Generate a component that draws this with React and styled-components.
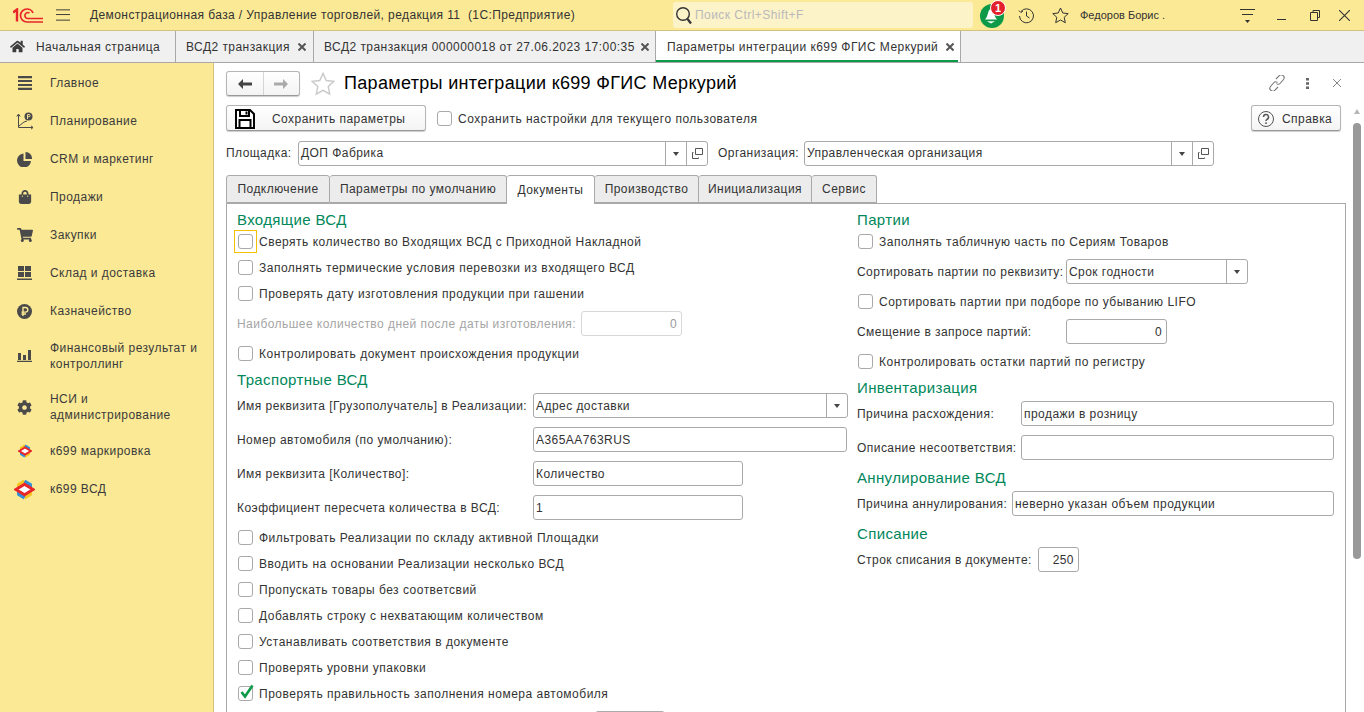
import React from 'react';
import styled, { createGlobalStyle } from 'styled-components';
import { FaHome, FaShoppingBag, FaShoppingCart, FaCog } from 'react-icons/fa';

const GlobalStyle = createGlobalStyle`
  html, body {
    margin: 0;
    height: 100%;
    overflow: hidden;
    background: #fff;
  }
  * {
    box-sizing: border-box;
  }
  body {
    font-family: "Liberation Sans", Arial, sans-serif;
    font-size: 12px;
    letter-spacing: 0.45px;
    color: #333;
  }
`;

const yellow = '#fbe995';

const Page = styled.div`
  width: 1364px;
  height: 712px;
  overflow: hidden;
  display: flex;
  flex-direction: column;
`;

const TopBar = styled.div`
  height: 31px;
  flex: none;
  display: flex;
  align-items: center;
  background: ${yellow};
  border-bottom: 1px solid #d2c27e;
`;
const Logo = styled.div`
  width: 56px;
  padding-left: 13px;
  display: flex;
`;
const IconSlot = styled.div`
  width: ${(p) => p.$w}px;
  flex: none;
  display: flex;
  align-items: center;
  justify-content: center;
  color: #3c3c3c;
`;
const AppTitle = styled.div`
  width: 583px;
  margin-left: 20px;
  letter-spacing: 0.41px;
  white-space: nowrap;
`;
const Search = styled.div`
  width: 300px;
  height: 26px;
  flex: none;
  background: #fdf3c9;
  border-radius: 3px;
  display: flex;
  align-items: center;
  gap: 2px;
  padding-left: 2px;
  color: #b9b9b9;
`;
const Bell = styled.div`
  position: relative;
  width: 24px;
  height: 24px;
  margin: 1px 0 0 7px;
  flex: none;
  border-radius: 50%;
  background: #0d9a48;
  display: flex;
  align-items: center;
  justify-content: center;
  padding: 2px 3px 0 0;
`;
const Badge = styled.span`
  position: absolute;
  top: -4px;
  right: -2px;
  width: 16px;
  height: 16px;
  border-radius: 50%;
  background: #e3202b;
  border: 1px solid #fff;
  color: #fff;
  font-size: 11px;
  font-weight: bold;
  letter-spacing: 0;
  line-height: 14px;
  text-align: center;
`;
const UserName = styled.div`
  width: 152px;
  font-size: 11px;
  letter-spacing: 0;
  white-space: nowrap;
`;

const TabBar = styled.div`
  height: 32px;
  flex: none;
  display: flex;
  background: #f0f0f0;
  border-bottom: 1px solid #a8a8a8;
`;
const OpenTab = styled.div`
  position: relative;
  height: 31px;
  display: flex;
  align-items: center;
  width: ${(p) => p.$w}px;
  padding-left: ${(p) => p.$pad}px;
  padding-right: ${(p) => p.$pr || 7}px;
  flex: none;
  justify-content: space-between;
  white-space: nowrap;
  border-right: 1px solid #a8a8a8;
  background: ${(p) => (p.$active ? '#fff' : 'transparent')};

  ${(p) =>
    p.$active &&
    `&::after {
      content: '';
      position: absolute;
      left: 0;
      right: 2px;
      bottom: 0;
      height: 2px;
      background: #0d9a48;
    }`}
`;
const HomeLabel = styled.span`
  display: flex;
  align-items: center;
  gap: 11px;
`;
const TabClose = styled.svg`
  flex: none;
  width: 8px;
  height: 8px;
  stroke: #555;
  stroke-width: 2;
`;

const Body = styled.div`
  flex: 1;
  min-height: 0;
  display: flex;
`;
const Sidebar = styled.nav`
  width: 214px;
  flex: none;
  background: ${yellow};
  border-right: 1px solid #d2c27e;
  padding-top: 1px;
`;
const NavItem = styled.div`
  height: ${(p) => p.$h || 38}px;
  display: flex;
  align-items: center;
  color: #3b3b3b;
  line-height: 16px;
`;
const NavIcon = styled.div`
  width: 50px;
  flex: none;
  display: flex;
  justify-content: center;
  padding-right: 1px;
  color: #4a4a4a;
`;

const Main = styled.main`
  flex: 1;
  min-width: 0;
  display: flex;
`;
const Content = styled.div`
  flex: 1;
  min-width: 0;
  padding: 8px 0 0 12px;
`;
const HeadRow = styled.div`
  height: 26px;
  margin-bottom: 8px;
  display: flex;
  align-items: flex-start;
`;
const NavGroup = styled.div`
  width: 74px;
  height: 25px;
  display: flex;
  border: 1px solid #b5b5b5;
  border-bottom-color: #999;
  border-radius: 3px;
  box-shadow: 0 1px 1px #ccc;
  background: linear-gradient(#fff, #f3f3f3);
`;
const NavBtn = styled.div`
  flex: 1;
  display: flex;
  align-items: center;
  justify-content: center;
  & + & {
    border-left: 1px solid #d5d5d5;
  }
`;
const FavSlot = styled.div`
  width: 24px;
  height: 25px;
  margin-left: 11px;
  flex: none;
  display: flex;
  align-items: center;
`;
const Title = styled.h1`
  margin: 1px 0 0 9px;
  font-size: 18px;
  line-height: 22px;
  font-weight: normal;
  color: #000;
  letter-spacing: 0.32px;
  white-space: nowrap;
`;
const HeadTools = styled.div`
  margin: 0 -7px 0 auto;
  height: 24px;
  display: flex;
  color: #777;
`;
const ActionRow = styled.div`
  height: 28px;
  margin-bottom: 8px;
  display: flex;
  align-items: flex-start;
`;
const Button = styled.div`
  width: ${(p) => p.$w}px;
  height: 26px;
  margin-right: ${(p) => p.$mr || 0}px;
  padding-top: 1px;
  flex: none;
  display: flex;
  align-items: center;
  border: 1px solid #b5b5b5;
  border-bottom-color: #999;
  border-radius: 3px;
  box-shadow: 0 1px 1px #ccc;
  background: linear-gradient(#fff, #f4f4f4);
`;
const SaveLabel = styled.span`
  margin-left: 9px;
`;
const HelpLabel = styled.span`
  margin-left: 2px;
`;
const Spacer = styled.div`
  flex: 1;
`;
const TopFields = styled.div`
  height: 26px;
  display: flex;
  align-items: flex-start;
  line-height: 25px;
`;
const TopLabel = styled.div`
  width: ${(p) => p.$w}px;
  flex: none;
  white-space: nowrap;
`;

const Input = styled.div`
  width: ${(p) => p.$w}px;
  height: 25px;
  flex: none;
  display: flex;
  align-items: center;
  border: 1px solid ${(p) => (p.$disabled ? '#d8d8d8' : '#a9a9a9')};
  border-radius: 3px;
  background: #fff;
  padding-left: ${(p) => (p.$right ? 0 : 2)}px;
  margin-right: ${(p) => p.$mr || 0}px;
  color: ${(p) => (p.$disabled ? '#999' : '#333')};
`;
const InputText = styled.span`
  flex: 1;
  white-space: nowrap;
  text-align: ${(p) => (p.$right ? 'right' : 'left')};
  padding-right: ${(p) => (p.$right ? 4 : 0)}px;
`;
const InputBtn = styled.span`
  width: ${(p) => p.$w || 21}px;
  height: 100%;
  flex: none;
  display: flex;
  align-items: center;
  justify-content: center;
  border-left: 1px solid #a9a9a9;
`;

const TabStrip = styled.div`
  display: flex;
  height: 29px;
  margin-top: 8px;
  position: relative;
  z-index: 1;
`;
const FormTab = styled.div`
  height: ${(p) => (p.$active ? 29 : 28)}px;
  width: ${(p) => p.$w}px;
  flex: none;
  display: flex;
  align-items: center;
  justify-content: center;
  white-space: nowrap;
  border: 1px solid #a9a9a9;
  border-left-width: ${(p) => (p.$first ? 1 : 0)}px;
  border-bottom: ${(p) => (p.$active ? 'none' : '1px solid #a9a9a9')};
  border-radius: 3px 3px 0 0;
  background: ${(p) => (p.$active ? '#fff' : '#ececec')};
`;
const TabPanel = styled.div`
  width: 1120px;
  height: 600px;
  margin-top: -1px;
  border: 1px solid #a9a9a9;
  display: grid;
  grid-template-columns: 620px 1fr;
  padding: 6px 0 0 10px;
`;
const Column = styled.div`
  display: flex;
  flex-direction: column;
`;
const Heading = styled.h2`
  height: ${(p) => p.$h || 22}px;
  margin: 0;
  display: flex;
  align-items: flex-end;
  font-size: 15px;
  font-weight: normal;
  letter-spacing: 0.35px;
  line-height: 16px;
  color: #00875a;
`;
const CheckRow = styled.label`
  height: 26px;
  flex: none;
  display: flex;
  align-items: center;
  gap: 6px;
  padding: 1px 0 0 1px;
  margin-left: ${(p) => p.$ml || 0}px;
  letter-spacing: 0.5px;
  white-space: nowrap;
`;
const Box = styled.span`
  position: relative;
  width: 15px;
  height: 15px;
  margin-top: -1px;
  flex: none;
  border: 1px solid #a9a9a9;
  border-radius: 3px;
  background: #fff;

  ${(p) =>
    p.$focus &&
    `&::after {
      content: '';
      position: absolute;
      inset: -5px -5px -5px -5px;
      border: 1px solid #f2c100;
    }`}
`;
const Tick = styled.svg`
  position: absolute;
  left: 1px;
  top: -3px;
`;
const FieldRow = styled.div`
  height: 34px;
  flex: none;
  display: flex;
  align-items: flex-start;
  padding-top: 5px;
  line-height: 26px;
`;
const FieldLabel = styled.div`
  width: ${(p) => p.$w}px;
  flex: none;
  white-space: nowrap;
  color: ${(p) => (p.$disabled ? '#a5a5a5' : 'inherit')};
`;

const ScrollColumn = styled.div`
  width: 19px;
  flex: none;
  padding: 46px 3px 0 8px;
  display: flex;
  flex-direction: column;
  align-items: center;
`;
const ScrollUp = styled.div`
  width: 0;
  height: 0;
  margin-bottom: 9px;
  border-left: 3px solid transparent;
  border-right: 3px solid transparent;
  border-bottom: 5px solid #b5b5b5;
`;
const ScrollThumb = styled.div`
  width: 8px;
  height: 436px;
  border-radius: 4px;
  background: #999;
`;

const ArrowDown = () => (
  <svg width="6" height="4" viewBox="0 0 6 4">
    <path d="M0 0h6L3 4z" fill="#444" />
  </svg>
);

const OpenIcon = () => (
  <svg width="11" height="11" viewBox="0 0 11 11" fill="none" stroke="#555">
    <path d="M3.500.5h7v6h-7z" />
    <path d="M1.500 4.500h-1v6h6v-1" />
  </svg>
);

const Logo1C = () => (
  <svg width="30" height="15" viewBox="0 0 30 15" fill="none" stroke="#e8262a" strokeWidth="1.700">
    <path d="M0 4.500L4 1.500V13.500" strokeWidth="2.400" />
    <path d="M30 14H14A6.500 6.500 0 1 1 14 1C17 1 19 2.500 20 5" />
    <path d="M30 10.500H14.500A3 3 0 1 1 16.500 5" />
  </svg>
);

const Burger = () => (
  <svg width="15" height="12" viewBox="0 0 15 12" stroke="#333">
    <path d="M0 .5h15M0 5.500h15M0 11.500h15" />
  </svg>
);

const BellGlyph = () => (
  <svg width="14" height="15" viewBox="0 0 14 15" fill="#fff">
    <path d="M7 0c1 0 2 1 2.500 2.500C10.500 5 10.500 8 13 10.500H1C3.500 8 3.500 5 4.500 2.500 5 1 6 0 7 0z" />
    <path d="M3 12.200h8L7 14.500z" />
  </svg>
);

const HistoryIcon = () => (
  <svg width="17" height="17" viewBox="0 0 17 17" fill="none" stroke="#333">
    <path d="M3 4.500A7 7 0 1 1 1.500 9" />
    <path d="M1 3.500L2.800 5.500 5 4" />
    <path d="M8.500 4.500v4.500l3 2" />
  </svg>
);

const StarIcon = ({ size = 17, color = '#333' }) => (
  <svg width={size} height={size} viewBox="0 0 17 17" fill="none" stroke={color}>
    <path d="M8.500 1l2.300 5 5.400.6-4 3.700 1.100 5.400-4.800-2.700-4.800 2.700 1.100-5.400-4-3.700 5.400-.6z" />
  </svg>
);

const PlanIcon = () => (
  <svg width="18" height="18" viewBox="0 0 18 18" fill="none" stroke="#4a4a4a">
    <path d="M2.500 3v12.500H17" />
    <path d="M.8 4.500L2.500 2l1.700 2.500M15 13.800l2 1.700-2 1.700" />
    <path d="M3 14l5-4 3-1" />
    <circle cx="12.500" cy="4.500" r="4" fill="#4a4a4a" stroke="none" />
    <path d="M11.500 7V2.500h1.500a1 1 0 0 1 0 2.200h-2" stroke="#fbe995" strokeWidth="0.9" />
  </svg>
);

const MenuIcon = () => (
  <svg width="14" height="14" viewBox="0 0 14 14" fill="#4a4a4a">
    <path d="M0 0h14v2.200H0zM0 3.900h14v2.200H0zM0 7.900h14v2.200H0zM0 11.800h14V14H0z" />
  </svg>
);

const PieIcon = () => (
  <svg width="15" height="15" viewBox="0 0 15 15" fill="#4a4a4a">
    <path d="M6.500 1.500v7.500H14A7 7 0 1 1 6.500 1.500z" />
    <path d="M8.500 0A6.500 6.500 0 0 1 15 7H8.500z" />
  </svg>
);

const WarehouseIcon = () => (
  <svg width="15" height="14" viewBox="0 0 15 14" fill="#4a4a4a">
    <path d="M1 0h6v5H1zM8 0h6v5H8zM1 6h6v5H1zM8 6h6v5H8zM0 12.500h15V14H0z" />
  </svg>
);

const RubleIcon = () => (
  <svg width="15" height="15" viewBox="0 0 15 15">
    <circle cx="7.500" cy="7.500" r="7.500" fill="#4a4a4a" />
    <path d="M6 12V3.500h2.500a2.300 2.300 0 0 1 0 4.600H4.500M4.500 10h4.500" fill="none" stroke="#fbe995" strokeWidth="1.400" />
  </svg>
);

const BarsIcon = () => (
  <svg width="15" height="12" viewBox="0 0 15 12" fill="#4a4a4a">
    <path d="M1 3h3v7H1zM6 5h3v5H6zM11 0h3v10h-3zM0 10.800h15V12H0z" />
  </svg>
);

const K699Icon = ({ size }) => (
  <svg width={size} height={size} viewBox="0 0 20 20" fill="none" strokeWidth="3.200">
    <path d="M4.500 9V5.500L10 2" stroke="#f7c520" />
    <path d="M10 2L15.500 5.500V10" stroke="#2f8fd8" />
    <path d="M15.500 11V14.500L10 18" stroke="#f7c520" />
    <path d="M10 18L4.500 14.500V10" stroke="#2f8fd8" />
    <path d="M1.800 10L10 5 18.200 10 10 15Z" stroke="#e8262a" strokeWidth="2.800" fill="#fff" />
  </svg>
);

const SaveIcon = () => (
  <svg width="20" height="20" viewBox="0 0 20 20" fill="none" stroke="#000" strokeWidth="2">
    <path d="M1 1h14l4 4v14H1z" fill="#fff" />
    <path d="M5 1v6h9V1" />
    <path d="M11.500 2.500v3" />
    <path d="M4.500 19v-8h11v8" />
  </svg>
);

const BackArrow = ({ color, flip }) => (
  <svg width="14" height="10" viewBox="0 0 14 10" fill={color} style={flip ? { transform: 'scaleX(-1)' } : undefined}>
    <path d="M0 5l5-5v3.500h9v3H5V10z" />
  </svg>
);

const HelpIcon = () => (
  <svg width="18" height="18" viewBox="0 0 18 18" fill="none" stroke="#555">
    <circle cx="9" cy="9" r="7.500" />
    <path d="M6.500 7a2.500 2.500 0 1 1 3.500 2.300c-.7.4-1 .8-1 1.700" strokeWidth="1.500" />
    <path d="M9 12.300v1.700" strokeWidth="1.500" />
  </svg>
);

const LinkIcon = () => (
  <svg width="16" height="16" viewBox="0 0 16 16" fill="none" stroke="#777" strokeWidth="1.100">
    <path d="M7 4l3-3a2.500 2.500 0 0 1 4.500 3.500L11 8.500a2.300 2.300 0 0 1-3.500 0" />
    <path d="M9 12l-3 3a2.500 2.500 0 0 1-4.500-3.500L5 7.500a2.300 2.300 0 0 1 3.500 0" />
  </svg>
);

const DotsIcon = () => (
  <svg width="3" height="11" viewBox="0 0 3 11" fill="#666">
    <path d="M0 0h3v2.500H0zM0 4.200h3v2.500H0zM0 8.500h3V11H0z" />
  </svg>
);

const CrossIcon = ({ size = 8, color = '#666' }) => (
  <svg width={size} height={size} viewBox="0 0 8 8" stroke={color} strokeWidth="0.8">
    <path d="M0 0l8 8M8 0L0 8" />
  </svg>
);

const SearchIcon = () => (
  <svg width="18" height="19" viewBox="0 0 18 19" fill="none" stroke="#333" strokeWidth="1.400">
    <circle cx="8" cy="8" r="6.300" />
    <path d="M12.500 13l3.500 4.500" strokeWidth="2.200" />
  </svg>
);

const PanelMenu = () => (
  <svg width="15" height="15" viewBox="0 0 15 15" fill="#333">
    <path d="M0 1h15v1H0zM2 6h11v1H2zM5 12h5l-2.500 3z" />
  </svg>
);

const CloseMark = () => (
  <TabClose viewBox="0 0 8 8">
    <path d="M0.500 0.500l7 7M7.500 0.500l-7 7" />
  </TabClose>
);

const Check = ({ label, checked, focus }) => (
  <CheckRow>
    <Box $focus={focus}>
      {checked && (
        <Tick width="14" height="15" viewBox="0 0 14 15" fill="none" stroke="#0d9a48" strokeWidth="2.600">
          <path d="M1.500 8l3.500 4.500L12.500 1.500" />
        </Tick>
      )}
    </Box>
    {label}
  </CheckRow>
);

const Field = ({ label, labelWidth, width, value, right, select, disabled }) => (
  <FieldRow>
    <FieldLabel $w={labelWidth} $disabled={disabled}>{label}</FieldLabel>
    <Input $w={width} $right={right} $disabled={disabled}>
      <InputText $right={right}>{value}</InputText>
      {select && (
        <InputBtn>
          <ArrowDown />
        </InputBtn>
      )}
    </Input>
  </FieldRow>
);

const menu = [
  { label: 'Главное', icon: <MenuIcon /> },
  { label: 'Планирование', icon: <PlanIcon /> },
  { label: 'CRM и маркетинг', icon: <PieIcon /> },
  { label: 'Продажи', icon: <FaShoppingBag size={14} /> },
  { label: 'Закупки', icon: <FaShoppingCart size={16} /> },
  { label: 'Склад и доставка', icon: <WarehouseIcon /> },
  { label: 'Казначейство', icon: <RubleIcon /> },
  { label: <>Финансовый результат и<br />контроллинг</>, icon: <BarsIcon />, h: 52 },
  { label: <>НСИ и<br />администрирование</>, icon: <FaCog size={15} />, h: 50 },
  { label: 'к699 маркировка', icon: <K699Icon size={14} /> },
  { label: 'к699 ВСД', icon: <K699Icon size={21} /> },
];

const App = () => (
  <Page>
    <GlobalStyle />
    <TopBar>
      <Logo><Logo1C /></Logo>
      <IconSlot $w={14}><Burger /></IconSlot>
      <AppTitle>Демонстрационная база / Управление торговлей, редакция 11&nbsp; (1С:Предприятие)</AppTitle>
      <Search><SearchIcon />Поиск Ctrl+Shift+F</Search>
      <Bell>
        <BellGlyph />
        <Badge>1</Badge>
      </Bell>
      <IconSlot $w={44}><HistoryIcon /></IconSlot>
      <IconSlot $w={24}><StarIcon /></IconSlot>
      <IconSlot $w={8} />
      <UserName>Федоров Борис .</UserName>
      <IconSlot $w={30}><PanelMenu /></IconSlot>
      <IconSlot $w={38}>
        <svg width="9" height="9" viewBox="0 0 9 9" stroke="#333"><path d="M0 8.500h9" /></svg>
      </IconSlot>
      <IconSlot $w={30}>
        <svg width="10" height="11" viewBox="0 0 10 11" fill="none" stroke="#333"><path d="M3 2.500V.5h6.500v7h-2M.5 2.500h7v8h-7z" /></svg>
      </IconSlot>
      <IconSlot $w={28}><CrossIcon size={11} color="#333" /></IconSlot>
    </TopBar>

    <TabBar>
      <OpenTab $w={176} $pad={10}>
        <HomeLabel><FaHome size={15} color="#3c3c3c" />Начальная страница</HomeLabel>
      </OpenTab>
      <OpenTab $w={138} $pad={10}>ВСД2 транзакция <CloseMark /></OpenTab>
      <OpenTab $w={342} $pad={10} $pr={6}>ВСД2 транзакция 000000018 от 27.06.2023 17:00:35 <CloseMark /></OpenTab>
      <OpenTab $w={305} $pad={11} $pr={6} $active>Параметры интеграции к699 ФГИС Меркурий <CloseMark /></OpenTab>
    </TabBar>

    <Body>
      <Sidebar>
        {menu.map((item, i) => (
          <NavItem key={i} $h={item.h}>
            <NavIcon>{item.icon}</NavIcon>
            <span>{item.label}</span>
          </NavItem>
        ))}
      </Sidebar>

      <Main>
        <Content>
          <HeadRow>
            <NavGroup>
              <NavBtn><BackArrow color="#444" /></NavBtn>
              <NavBtn><BackArrow color="#aaa" flip /></NavBtn>
            </NavGroup>
            <FavSlot><StarIcon size={24} color="#c9c9c9" /></FavSlot>
            <Title>Параметры интеграции к699 ФГИС Меркурий</Title>
            <HeadTools>
              <IconSlot $w={30}><LinkIcon /></IconSlot>
              <IconSlot $w={30}><DotsIcon /></IconSlot>
              <IconSlot $w={30}><CrossIcon /></IconSlot>
            </HeadTools>
          </HeadRow>

          <ActionRow>
            <Button $w={200}>
              <IconSlot $w={36}><SaveIcon /></IconSlot>
              <SaveLabel>Сохранить параметры</SaveLabel>
            </Button>
            <CheckRow $ml={10}>
              <Box />
              Сохранить настройки для текущего пользователя
            </CheckRow>
            <Spacer />
            <Button $w={90} $mr={4}>
              <IconSlot $w={28}><HelpIcon /></IconSlot>
              <HelpLabel>Справка</HelpLabel>
            </Button>
          </ActionRow>

          <TopFields>
            <TopLabel $w={72}>Площадка:</TopLabel>
            <Input $w={410} $mr={10}>
              <InputText>ДОП Фабрика</InputText>
              <InputBtn><ArrowDown /></InputBtn>
              <InputBtn><OpenIcon /></InputBtn>
            </Input>
            <TopLabel $w={86}>Организация:</TopLabel>
            <Input $w={410}>
              <InputText>Управленческая организация</InputText>
              <InputBtn><ArrowDown /></InputBtn>
              <InputBtn><OpenIcon /></InputBtn>
            </Input>
          </TopFields>

          <TabStrip>
            <FormTab $w={104} $first>Подключение</FormTab>
            <FormTab $w={177}>Параметры по умолчанию</FormTab>
            <FormTab $w={88} $active>Документы</FormTab>
            <FormTab $w={104}>Производство</FormTab>
            <FormTab $w={113}>Инициализация</FormTab>
            <FormTab $w={65}>Сервис</FormTab>
          </TabStrip>

          <TabPanel>
            <Column>
              <Heading $h={18}>Входящие ВСД</Heading>
              <Check label="Сверять количество во Входящих ВСД с Приходной Накладной" focus />
              <Check label="Заполнять термические условия перевозки из входящего ВСД" />
              <Check label="Проверять дату изготовления продукции при гашении" />
              <Field disabled label="Наибольшее количество дней после даты изготовления:" labelWidth={344} width={101} value="0" right />
              <Check label="Контролировать документ происхождения продукции" />
              <Heading>Траспортные ВСД</Heading>
              <Field label="Имя реквизита [Грузополучатель] в Реализации:" labelWidth={296} width={315} value="Адрес доставки" select />
              <Field label="Номер автомобиля (по умолчанию):" labelWidth={296} width={314} value="А365АА763RUS" />
              <Field label="Имя реквизита [Количество]:" labelWidth={296} width={210} value="Количество" />
              <Field label="Коэффициент пересчета количества в ВСД:" labelWidth={296} width={210} value="1" />
              <Check label="Фильтровать Реализации по складу активной Площадки" />
              <Check label="Вводить на основании Реализации несколько ВСД" />
              <Check label="Пропускать товары без соответсвий" />
              <Check label="Добавлять строку с нехватающим количеством" />
              <Check label="Устанавливать соответствия в документе" />
              <Check label="Проверять уровни упаковки" />
              <Check label="Проверять правильность заполнения номера автомобиля" checked />
              <Field label="" labelWidth={358} width={70} value="" />
            </Column>
            <Column>
              <Heading $h={18}>Партии</Heading>
              <Check label="Заполнять табличную часть по Сериям Товаров" />
              <Field label="Сортировать партии по реквизиту:" labelWidth={209} width={182} value="Срок годности" select />
              <Check label="Сортировать партии при подборе по убыванию LIFO" />
              <Field label="Смещение в запросе партий:" labelWidth={209} width={101} value="0" right />
              <Check label="Контролировать остатки партий по регистру" />
              <Heading>Инвентаризация</Heading>
              <Field label="Причина расхождения:" labelWidth={164} width={313} value="продажи в розницу" />
              <Field label="Описание несоответствия:" labelWidth={164} width={313} value="" />
              <Heading>Аннулирование ВСД</Heading>
              <Field label="Причина аннулирования:" labelWidth={155} width={322} value="неверно указан объем продукции" />
              <Heading>Списание</Heading>
              <Field label="Строк списания в документе:" labelWidth={181} width={41} value="250" right />
            </Column>
          </TabPanel>
        </Content>
        <ScrollColumn>
          <ScrollUp />
          <ScrollThumb />
        </ScrollColumn>
      </Main>
    </Body>
  </Page>
);

export default App;
